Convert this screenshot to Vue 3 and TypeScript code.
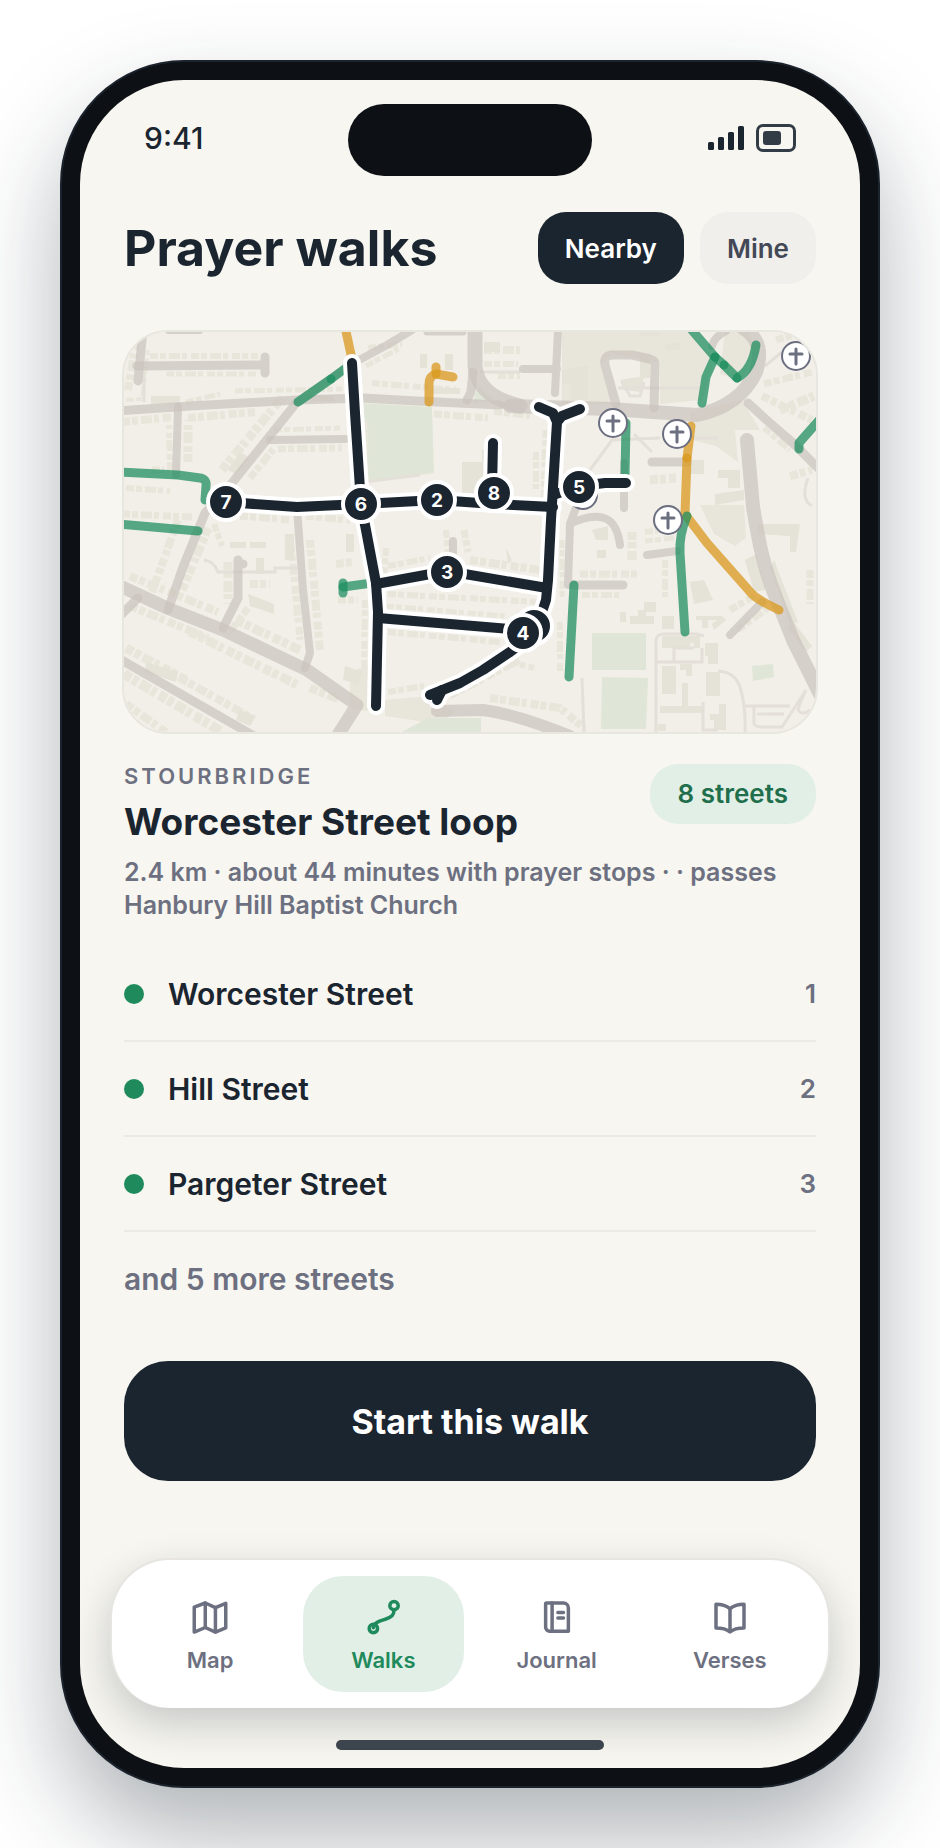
<script setup lang="ts">
import { ref } from 'vue'

interface Line {
  d: string
  w: number
}
interface Stop {
  label: string
  x: number
  y: number
}

const views = ['Nearby', 'Mine']
const view = ref('Nearby')
const tab = ref('Walks')

const streets = ['Worcester Street', 'Hill Street', 'Pargeter Street']

const landuse = [
  'M562 332H688L715 360L702 400L660 404V362L612 354L600 364L612 404H562Z',
  'M725 330H748L756 350L742 382L720 374Z',
  'M350 672L372 664V712L350 708Z',
  'M385 700L430 696L455 712L440 724L385 716Z',
  'M690 412L742 400L760 430H735L738 462L716 446L692 440Z',
  'M700 505H744L746 538L735 546L714 534Z',
]

const parks = [
  'M362 403L432 407L434 473L366 482Z',
  'M478 387L494 400L473 403Z',
  'M592 633H646V670H592Z',
  'M602 677L648 678L646 729H601Z',
  'M752 666L773 664L774 677L753 681Z',
  'M398 734L428 718H481V734Z',
]

/* Terraces of houses: one dash per house along each frontage. */
const terraces: Line[] = [
  { d: 'M150 356H258', w: 6 },
  { d: 'M166 374H258', w: 5 },
  { d: 'M128 390L136 342', w: 8 },
  { d: 'M126 400L142 399L148 350', w: 4 },
  { d: 'M235 391L342 389', w: 5 },
  { d: 'M122 422L172 417', w: 8 },
  { d: 'M188 418L255 412', w: 8 },
  { d: 'M186 402L220 394', w: 5 },
  { d: 'M170 470L169 425', w: 6 },
  { d: 'M188 462V420', w: 9 },
  { d: 'M152 470L164 470', w: 7 },
  { d: 'M274 430L340 428', w: 5 },
  { d: 'M278 449L342 448', w: 7 },
  { d: 'M222 470L282 398', w: 9 },
  { d: 'M250 478L276 446', w: 7 },
  { d: 'M126 488L170 491', w: 6 },
  { d: 'M122 514L192 517', w: 7 },
  { d: 'M240 516L290 520', w: 7 },
  { d: 'M306 516L350 520', w: 7 },
  { d: 'M178 520L152 592', w: 8 },
  { d: 'M208 528L182 590', w: 9 },
  { d: 'M214 524L222 546', w: 6 },
  { d: 'M228 562V604', w: 9 },
  { d: 'M250 584H270', w: 8 },
  { d: 'M248 608L228 634', w: 7 },
  { d: 'M291 545L300 640', w: 7 },
  { d: 'M310 540L320 650', w: 8 },
  { d: 'M130 576L218 612', w: 8 },
  { d: 'M236 620L300 650', w: 9 },
  { d: 'M130 606L208 638', w: 8 },
  { d: 'M190 632L300 686', w: 9 },
  { d: 'M310 688L340 700', w: 8 },
  { d: 'M126 648L186 680', w: 9 },
  { d: 'M180 678L252 718', w: 8 },
  { d: 'M124 674L222 732', w: 10 },
  { d: 'M126 704L166 732', w: 8 },
  { d: 'M336 564L352 562', w: 8 },
  { d: 'M338 600L358 600', w: 7 },
  { d: 'M368 348L402 344', w: 6 },
  { d: 'M366 366L400 348', w: 5 },
  { d: 'M372 383L456 390', w: 6 },
  { d: 'M366 422V470', w: 5 },
  { d: 'M434 414L488 418', w: 7 },
  { d: 'M494 412L530 416', w: 6 },
  { d: 'M484 350H520', w: 8 },
  { d: 'M484 364H518', w: 6 },
  { d: 'M498 376H520', w: 6 },
  { d: 'M546 430L544 500', w: 7 },
  { d: 'M536 452V490', w: 6 },
  { d: 'M386 548L384 580', w: 6 },
  { d: 'M388 566L430 558', w: 6 },
  { d: 'M388 594L540 602', w: 6 },
  { d: 'M470 560L540 570', w: 8 },
  { d: 'M446 530L448 555', w: 6 },
  { d: 'M464 530L468 552', w: 7 },
  { d: 'M388 632L500 642', w: 6 },
  { d: 'M386 606L505 616', w: 5 },
  { d: 'M365 600L364 690', w: 6 },
  { d: 'M388 692L424 686', w: 6 },
  { d: 'M450 696L520 660', w: 7 },
  { d: 'M510 662L534 668', w: 6 },
  { d: 'M490 698L560 708L584 728', w: 8 },
  { d: 'M560 622V672', w: 6 },
  { d: 'M562 540V600', w: 5 },
  { d: 'M580 574H640', w: 7 },
  { d: 'M582 595H622', w: 6 },
  { d: 'M632 532V560', w: 9 },
  { d: 'M645 532L674 528', w: 6 },
  { d: 'M645 541L674 538', w: 5 },
  { d: 'M665 560V598', w: 6 },
  { d: 'M730 610L754 596', w: 7 },
  { d: 'M738 630L770 606', w: 7 },
  { d: 'M650 480L676 478', w: 9 },
  { d: 'M662 350L700 352', w: 7 },
  { d: 'M664 366L706 370', w: 8 },
  { d: 'M664 382L700 388', w: 7 },
  { d: 'M662 395H694', w: 5 },
  { d: 'M764 384L812 372', w: 7 },
  { d: 'M762 396L812 420', w: 8 },
  { d: 'M780 410L814 396', w: 9 },
  { d: 'M764 428L790 450', w: 6 },
  { d: 'M776 340L796 334', w: 7 },
  { d: 'M790 476L812 470', w: 8 },
  { d: 'M810 570V604', w: 7 },
]

const buildings = [
  'M151 396H180V404H151Z',
  'M310 395H334V401H310Z',
  'M228 470L240 452L250 458L236 474Z',
  'M230 542H246V548H230ZM250 542H266V548H250Z',
  'M256 558H264V574H256Z',
  'M248 594L274 604V614L250 606Z',
  'M285 534H294V560H285Z',
  'M346 534H354V552H346Z',
  'M345 666L362 672L358 684L343 680Z',
  'M146 662L178 672L176 682L145 672Z',
  'M240 710L256 716L250 726L236 720Z',
  'M420 354H427V368H420ZM445 354H453V370H445Z',
  'M432 388H460V394H432Z',
  'M462 462H482V495H462ZM482 450H488V480H482Z',
  'M484 342H500V352H484Z',
  'M562 370L588 366V400H570V384H562Z',
  'M640 354L650 352V378H640Z',
  'M665 346L680 342V350H665Z',
  'M620 380L644 376L640 392L624 390Z',
  'M690 460H704V474H690Z',
  'M718 470H740V488H728V478H718Z',
  'M715 494L744 490V500L715 505Z',
  'M758 524H800L796 552H790V536L758 534Z',
  'M745 560L756 554L766 590L754 592Z',
  'M774 560L798 622L790 624L770 568Z',
  'M690 582L704 580L713 600L694 604Z',
  'M792 620L812 646L806 652L788 628Z',
  'M592 530L608 526V540H596Z',
  'M597 550H606V558H597Z',
  'M620 612H626V622H620Z',
  'M630 616H638V610H646V616H654V624H630Z',
  'M644 602H656V612H644Z',
  'M662 616H674V629H662Z',
  'M696 616H722V620H708V628H702V620H696Z',
  'M712 624L722 616L726 620L714 630Z',
  'M662 636H700V648H694V643H690V648H662Z',
  'M705 643H718V664H708V656H705Z',
  'M662 666H676V694H662Z',
  'M680 664H692V676H686V670H680Z',
  'M706 672H720V696H706Z',
  'M682 683H688V706H703V713H660V706H682Z',
  'M719 704H726V730H714V720H710V714H719Z',
  'M658 724H666V731H658Z',
  'M506 548L512 560L508 564Z',
  'M640 330H660V336H640Z',
]

const lanes = [
  'M204 560Q214 561 218 572H275V568H297',
  'M656 732V640Q657 634 664 634H697L704 636',
  'M657 662H702V648',
  'M674 662V648H694',
  'M703 702V730H718M718 671Q735 672 740 687Q746 706 745 733',
  'M582 678L584 732',
  'M745 706H790M754 706V724Q756 727 762 727H782L806 690Q800 702 798 710Q802 716 810 710',
  'M757 714H784',
  'M590 470L612 440L660 438',
  'M634 434L652 452',
  'M692 438H718',
  'M765 366L782 352',
  'M480 372H520',
  'M144 372V402',
  'M364 482L420 475',
  'M808 478Q800 500 812 506',
  'M618 388H700',
  'M622 382L630 396H640L644 382',
]

const roads: Line[] = [
  { d: 'M143 330L138 381', w: 9 },
  { d: 'M137 366L265 365M265 357V373', w: 9 },
  { d: 'M118 411L190 406L297 400L363 398L417 401L500 405', w: 9 },
  { d: 'M168 331H200', w: 6 },
  { d: 'M178 407L176 475', w: 8 },
  { d: 'M297 402L232 483L205 513L183 567L168 610', w: 9 },
  { d: 'M297 402L350 365L387 345L412 330', w: 8 },
  { d: 'M270 440L345 439', w: 8 },
  { d: 'M427 332H463', w: 7 },
  { d: 'M475 322V366Q477 396 520 406', w: 15 },
  { d: 'M473 372L471 392L467 400', w: 9 },
  { d: 'M558 330L555 393M523 369H557', w: 8 },
  { d: 'M510 406L610 409L697 415Q740 406 756 372Q766 342 743 328', w: 14 },
  { d: 'M616 404L605 365Q603 356 612 355H632L650 359Q656 361 655 366L654 408', w: 9 },
  { d: 'M712 346Q714 337 726 331', w: 8 },
  { d: 'M748 403L770 423L793 443L820 470', w: 9 },
  { d: 'M747 440L753 507L757 530Q764 570 777 600L793 640L820 694', w: 14 },
  { d: 'M652 462H687', w: 9 },
  { d: 'M624 463V508', w: 8 },
  { d: 'M568 585L570 524L577 505M570 524Q590 514 604 518Q617 522 620 545', w: 8 },
  { d: 'M573 585H623', w: 9 },
  { d: 'M647 555L677 551', w: 8 },
  { d: 'M730 635L762 602', w: 8 },
  { d: 'M118 585L167 608L223 630L307 670L357 705L336 738', w: 13 },
  { d: 'M138 598L120 616', w: 9 },
  { d: 'M238 560V598L223 628M238 564H243', w: 9 },
  { d: 'M297 508L303 590L310 653L305 668', w: 8 },
  { d: 'M118 658L254 736', w: 9 },
  { d: 'M437 711L483 710Q516 714 570 736', w: 12 },
  { d: 'M453 541V553', w: 8 },
]

const prayed = [
  'M298 402L331 379',
  'M331 379L354 362',
  'M118 472L178 475L200 478Q207 479 206 486L205 500',
  'M118 524L198 531',
  'M343 583V593',
  'M343 587L372 583',
  'M685 322L715 357',
  'M715 357L724 365',
  'M724 365L737 378',
  'M715 357L706 377L702 403',
  'M737 378Q752 370 756 345',
  'M799 449V443L820 419',
  'M626 423L625 476',
  'M687 516Q679 535 680 553L685 632',
  'M574 585L569 677',
]

const planned = [
  'M344 322L353 364',
  'M436 367V374',
  'M453 377L436 374Q429 376 429 384V402',
  'M691 426L687 458',
  'M687 458L685 514L707 543L752 594Q758 600 779 610',
]

const walk = [
  'M352 363L355 413L361 504L366 530L376 583L378 612L376 706',
  'M226 502L297 507L361 504L437 500L494 504L553 507',
  'M493 443L492 490',
  'M539 407L553 413L557 422L551 520L548 580L546 600L535 633L510 652L483 670L460 683L430 695',
  'M580 409L562 416L557 422',
  'M442 690L437 700',
  'M376 584L447 571L547 588',
  'M378 618L523 630',
  'M556 494L580 486L605 483H626',
]

const stops: Stop[] = [
  { label: '7', x: 226, y: 502 },
  { label: '6', x: 361, y: 504 },
  { label: '2', x: 437, y: 500 },
  { label: '8', x: 494, y: 493 },
  { label: '5', x: 579, y: 487 },
  { label: '3', x: 447, y: 572 },
  { label: '1', x: 534, y: 626 },
  { label: '4', x: 523, y: 633 },
]

const churches = [
  [583, 495],
  [613, 423],
  [677, 434],
  [668, 520],
  [796, 356],
]

const tabs = [
  {
    name: 'Map',
    paths: ['M3 6.300 9.300 4l5.800 2.600L21 4.200v14l-5.900 2.400-5.800-2.600L3 20.600Z', 'M9.300 4v14', 'M15.100 6.600v14'],
  },
  {
    name: 'Walks',
    paths: [
      'M18.300 3.100a2.400 2.400 0 1 1 0 4.800 2.400 2.400 0 0 1 0-4.800Z',
      'M6.500 16.200a2.400 2.400 0 1 1 0 4.800 2.400 2.400 0 0 1 0-4.800Z',
      'M18.300 7.900c0 3-1.400 4.300-5 5.400S7 15 6.500 18.200',
    ],
  },
  {
    name: 'Journal',
    paths: ['M6 4h9.700a2.800 2.800 0 0 1 2.800 2.800v13.300H7.800A2.300 2.300 0 0 1 5.500 17.800V4.500A.5.500 0 0 1 6 4Z', 'M9.200 4v16', 'M12.500 9.400h3.200M12.500 12.600h3.200'],
  },
  {
    name: 'Verses',
    paths: ['M12 7.200C9.600 5.200 6.800 4.700 4 4.700v13.600c2.800 0 5.600.3 8 2.200 2.400-1.900 5.200-2.200 8-2.200V4.700c-2.800 0-5.600.5-8 2.500Z', 'M12 7.200v13'],
  },
]
</script>

<template>
  <div class="stage">
    <div class="phone">
      <div class="screen">
        <header class="status">
          <span class="clock">9:41</span>
          <span class="island"></span>
          <span class="indicators">
            <svg class="signal" viewBox="0 0 36 24" aria-hidden="true">
              <rect x="0" y="16" width="6" height="8" rx="1.500" />
              <rect x="10" y="11" width="6" height="13" rx="1.500" />
              <rect x="20" y="6" width="6" height="18" rx="1.500" />
              <rect x="30" y="0" width="6" height="24" rx="1.500" />
            </svg>
            <span class="battery"><span class="charge"></span></span>
          </span>
        </header>

        <main class="content">
          <div class="heading">
            <h1>Prayer walks</h1>
            <div class="switch">
              <button
                v-for="v in views"
                :key="v"
                type="button"
                :class="{ active: view === v }"
                :aria-pressed="view === v"
                @click="view = v"
              >
                {{ v }}
              </button>
            </div>
          </div>

          <div class="map">
            <svg viewBox="124 332 692 400" preserveAspectRatio="xMidYMid slice" role="img" aria-label="Walk route">
              <rect class="ground" x="124" y="332" width="692" height="400" />
              <path v-for="d in landuse" :key="d" class="land" :d="d" />
              <path v-for="d in parks" :key="d" class="park" :d="d" />
              <path v-for="t in terraces" :key="t.d" class="terrace" :d="t.d" :stroke-width="t.w" />
              <path v-for="d in buildings" :key="d" class="building" :d="d" />
              <path v-for="d in lanes" :key="d" class="lane" :d="d" />
              <path v-for="r in roads" :key="r.d" class="road" :d="r.d" :stroke-width="r.w" />
              <path v-for="d in planned" :key="d" class="planned" :d="d" />
              <path v-for="d in prayed" :key="d" class="prayed" :d="d" />
              <g v-for="c in churches" :key="c.join()" class="church" :transform="`translate(${c[0]} ${c[1]})`">
                <circle r="14" />
                <path d="M0 -7V8M-6 -2H6" />
              </g>
              <path v-for="d in walk" :key="'c' + d" class="casing" :d="d" />
              <path v-for="d in walk" :key="d" class="walk" :d="d" />
              <g v-for="s in stops" :key="s.label" class="stop" :transform="`translate(${s.x} ${s.y})`">
                <circle r="18" />
                <text y="7">{{ s.label }}</text>
              </g>
            </svg>
          </div>

          <section class="summary">
            <div class="summary-top">
              <div>
                <p class="town">Stourbridge</p>
                <h2>Worcester Street loop</h2>
              </div>
              <span class="count">8 streets</span>
            </div>
            <p class="meta">2.4 km · about 44 minutes with prayer stops · · passes Hanbury Hill Baptist Church</p>
          </section>

          <ol class="streets">
            <li v-for="(name, i) in streets" :key="name">
              <span class="dot"></span>
              <span class="name">{{ name }}</span>
              <span class="order">{{ i + 1 }}</span>
            </li>
          </ol>
          <p class="more">and 5 more streets</p>

          <button type="button" class="start">Start this walk</button>
        </main>

        <nav class="tabs">
          <button
            v-for="t in tabs"
            :key="t.name"
            type="button"
            :class="{ active: tab === t.name }"
            @click="tab = t.name"
          >
            <svg viewBox="0 0 24 24" aria-hidden="true">
              <path v-for="p in t.paths" :key="p" :d="p" />
            </svg>
            <span>{{ t.name }}</span>
          </button>
        </nav>
        <div class="home"></div>
      </div>
    </div>
  </div>
</template>

<style>
body {
  background: #fff;
}
</style>

<style scoped>
* {
  box-sizing: border-box;
}
.stage {
  padding: 60px;
  overflow: hidden;
  font-family: Inter, 'Liberation Sans', sans-serif;
  color: #1b2530;
}
h1,
h2,
p,
ol {
  margin: 0;
  padding: 0;
}
button {
  border: 0;
  font: inherit;
  cursor: pointer;
}
.phone {
  padding: 18px;
  border: 2px solid #1b232d;
  border-radius: 124px;
  background: #0d1014;
  box-shadow: 0 48px 96px rgba(27, 37, 48, 0.34);
}
.screen {
  display: flex;
  flex-direction: column;
  border-radius: 104px;
  background: #f7f6f0;
  overflow: hidden;
}
.status {
  display: grid;
  grid-template-columns: 1fr 244px 1fr;
  align-items: center;
  padding: 24px 64px 0;
}
.clock {
  padding-bottom: 4px;
  font-size: 30px;
  line-height: 36px;
  font-weight: 500;
}
.island {
  height: 72px;
  border-radius: 36px;
  background: #0d1014;
}
.indicators {
  display: flex;
  justify-content: flex-end;
  align-items: center;
  gap: 12px;
  padding-bottom: 4px;
}
.signal {
  width: 36px;
  height: 24px;
  fill: #1b2530;
}
.battery {
  width: 40px;
  height: 28px;
  padding: 4px;
  border: 3px solid #323c47;
  border-radius: 7px;
}
.charge {
  display: block;
  width: 18px;
  height: 14px;
  border-radius: 3px;
  background: #323c47;
}
.content {
  padding: 36px 44px 0;
}
.heading {
  display: flex;
  justify-content: space-between;
  align-items: center;
}
h1 {
  font-size: 50px;
  line-height: 64px;
  font-weight: 700;
  white-space: nowrap;
}
.switch {
  display: flex;
  gap: 16px;
}
.switch button {
  height: 72px;
  padding: 0 27px;
  border-radius: 28px;
  background: #f1efeb;
  color: #434857;
  font-size: 26px;
  font-weight: 600;
}
.switch button.active {
  background: #1b2530;
  color: #fff;
}
.map {
  margin: 46px -2px 0;
  border: 2px solid #e7e6df;
  border-radius: 46px;
  overflow: hidden;
}
.map svg {
  display: block;
  width: 100%;
}
.ground {
  fill: #f2efe9;
}
.land {
  fill: #e8e5db;
}
.park {
  fill: #e0e6d7;
}
.terrace {
  fill: none;
  stroke: #e8e5db;
  stroke-dasharray: 8 2 6 3 11 2 5 4;
}
.building {
  fill: #e5e2d7;
}
.lane {
  fill: none;
  stroke: #e4dfd8;
  stroke-width: 3;
}
.road {
  fill: none;
  stroke: #cbc4be;
  stroke-opacity: 0.72;
  stroke-linecap: round;
  stroke-linejoin: round;
}
.prayed,
.planned {
  fill: none;
  stroke-width: 9;
  stroke-linecap: round;
  stroke-linejoin: round;
  stroke-opacity: 0.75;
}
.prayed {
  stroke: #1f8f5f;
}
.planned {
  stroke: #da981c;
}
.casing,
.walk {
  fill: none;
  stroke-linecap: round;
  stroke-linejoin: round;
}
.casing {
  stroke: #fff;
  stroke-width: 18;
}
.walk {
  stroke: #1b2530;
  stroke-width: 10;
}
.church circle {
  fill: #fff;
  stroke: #6b6f80;
  stroke-width: 2;
}
.church path {
  stroke: #6b6f80;
  stroke-width: 3;
  stroke-linecap: round;
}
.stop circle {
  fill: #1b2530;
  stroke: #fff;
  stroke-width: 4;
}
.stop text {
  fill: #fff;
  font-size: 19px;
  font-weight: 700;
  text-anchor: middle;
}
.summary {
  padding-top: 30px;
}
.summary-top {
  display: flex;
  justify-content: space-between;
  align-items: flex-start;
}
.town {
  color: #6d7080;
  font-size: 22px;
  line-height: 24px;
  font-weight: 600;
  letter-spacing: 3px;
  text-transform: uppercase;
}
h2 {
  margin-top: 10px;
  font-size: 37px;
  line-height: 48px;
  font-weight: 700;
}
.count {
  padding: 0 28px;
  border-radius: 28px;
  background: #e2efe7;
  color: #1f6f4c;
  font-size: 26px;
  line-height: 60px;
  font-weight: 600;
}
.meta {
  margin-top: 10px;
  color: #6d7080;
  font-size: 25px;
  line-height: 33px;
  font-weight: 600;
}
.streets {
  margin-top: 25px;
  list-style: none;
}
.streets li {
  display: flex;
  align-items: center;
  gap: 24px;
  height: 95px;
  border-bottom: 2px solid #ebeae5;
}
.dot {
  width: 20px;
  height: 20px;
  border-radius: 50%;
  background: #1f8a5b;
}
.name {
  flex: 1;
  font-size: 30px;
  font-weight: 600;
}
.order {
  color: #6d7080;
  font-size: 26px;
  font-weight: 600;
}
.more {
  color: #6d7080;
  font-size: 30px;
  line-height: 95px;
  font-weight: 600;
}
.start {
  display: block;
  width: 100%;
  height: 120px;
  margin-top: 34px;
  border-radius: 44px;
  background: #1b2530;
  color: #fff;
  font-size: 34px;
  font-weight: 700;
}
.tabs {
  display: grid;
  grid-template-columns: repeat(4, 1fr);
  gap: 13px;
  margin: 77px 30px 0;
  padding: 16px 18px;
  border: 2px solid #e6e5e1;
  border-bottom-width: 0;
  border-radius: 60px;
  background: #fff;
  box-shadow: 0 16px 40px rgba(27, 37, 48, 0.22);
}
.tabs button {
  display: flex;
  flex-direction: column;
  align-items: center;
  gap: 6px;
  height: 116px;
  padding: 20px 0 0;
  border-radius: 40px;
  background: transparent;
  color: #6d7080;
  font-size: 22px;
  line-height: 32px;
  font-weight: 600;
}
.tabs button.active {
  background: #e2efe7;
  color: #1f8a5b;
}
.tabs svg {
  width: 42px;
  height: 42px;
  fill: none;
  stroke: currentColor;
  stroke-width: 2;
  stroke-linecap: round;
  stroke-linejoin: round;
}
.home {
  width: 268px;
  height: 10px;
  margin: 32px auto 18px;
  border-radius: 5px;
  background: #3c454d;
}
</style>
